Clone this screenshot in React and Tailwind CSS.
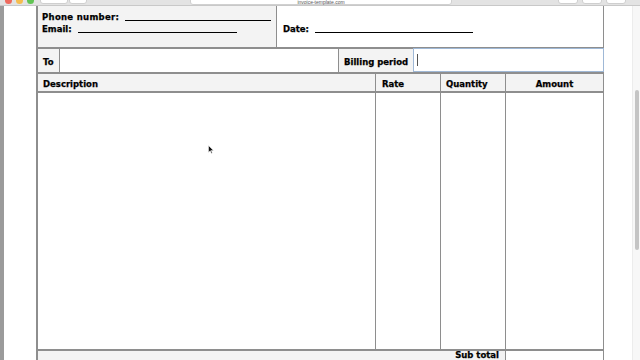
import React from "react";

export default function App() {
  const font = { fontFamily: '"DejaVu Sans", Verdana, sans-serif' };
  return (
    <div className="w-[640px] h-[360px] overflow-hidden bg-white flex flex-col" style={font}>
      {/* browser chrome remnant */}
      <div className="h-[6px] bg-[#e3e3e3] border-b border-[#c8c8c8] relative overflow-hidden shrink-0">
        <div className="absolute left-[5px] -top-[3px] flex gap-[4px]">
          <div className="w-[7px] h-[7px] rounded-full bg-[#ee6a5e]" />
          <div className="w-[7px] h-[7px] rounded-full bg-[#f5bd4f]" />
          <div className="w-[7px] h-[7px] rounded-full bg-[#61c454]" />
        </div>
        <div className="absolute left-[40px] -top-[6px] w-[28px] h-[10px] rounded-[3px] bg-white border border-[#cfcfcf]" />
        <div className="absolute left-[69px] -top-[6px] w-[18px] h-[10px] rounded-[3px] bg-white border border-[#cfcfcf]" />
        <div className="absolute left-[190px] -top-[6px] w-[262px] h-[11px] rounded-[3px] bg-white border border-[#d0d0d0]" />
        <div className="absolute left-[190px] top-0 w-[262px] flex justify-center">
          <span className="text-[5px] leading-[5px] text-[#555] whitespace-nowrap" style={{ fontFamily: '"Liberation Sans", Arial, sans-serif' }}>invoice-template.com</span>
        </div>
        <div className="absolute left-[558px] -top-[6px] w-[20px] h-[10px] rounded-[3px] bg-white border border-[#cfcfcf]" />
        <div className="absolute left-[582px] -top-[6px] w-[20px] h-[10px] rounded-[3px] bg-white border border-[#cfcfcf]" />
        <div className="absolute left-[606px] -top-[6px] w-[20px] h-[10px] rounded-[3px] bg-white border border-[#cfcfcf]" />
      </div>

      <div className="flex flex-1 min-h-0">
        <div className="w-[4px] bg-[#9b9b9b] shrink-0" />
        <div className="flex-1 flex relative">
          <div className="w-[32px] shrink-0" />
          {/* invoice table */}
          <div className="w-[568px] flex flex-col text-[8.5px] font-bold text-black whitespace-nowrap [-webkit-text-stroke:0.25px_black] border-l-2 border-r border-[#8e8e8e]">
            {/* top row */}
            <div className="h-[43px] flex border-b-2 border-[#8e8e8e] shrink-0">
              <div className="w-[239px] bg-[#f3f3f3] border-r border-[#8e8e8e] px-[4px] pt-[5px] leading-[12px]">
                <div className="flex">
                  <span className="tracking-[0.3px]">Phone number:</span>
                  <span className="ml-[6px] w-[146px] border-b border-black mb-[2px]" />
                </div>
                <div className="flex">
                  <span>Email:</span>
                  <span className="ml-[6px] w-[159px] border-b border-black mb-[2px]" />
                </div>
              </div>
              <div className="flex-1 px-[6px] pt-[17px] leading-[12px]">
                <div className="flex">
                  <span>Date:</span>
                  <span className="ml-[6px] w-[158px] border-b border-black mb-[2px]" />
                </div>
              </div>
            </div>
            {/* To row */}
            <div className="h-[25px] flex border-b-2 border-[#8e8e8e] shrink-0">
              <div className="w-[22px] bg-[#f3f3f3] border-r border-[#8e8e8e] flex items-center pl-[5px] pt-[3px]">To</div>
              <div className="w-[279px] border-r border-[#8e8e8e]" />
              <div className="w-[74px] bg-[#f3f3f3] flex items-center pl-[5px] pt-[3px]">Billing period</div>
              <div className="flex-1 border border-[#9fb8d6] flex items-center pl-[3px] -mr-px -mt-px bg-white">
                <div className="w-px h-[12px] bg-[#555]" />
              </div>
            </div>
            {/* header */}
            <div className="h-[19px] flex bg-[#f3f3f3] border-b-2 border-[#8e8e8e] shrink-0">
              <div className="w-[338px] border-r border-[#8e8e8e] flex items-center pl-[5px] pt-[3px]">Description</div>
              <div className="w-[65px] border-r border-[#8e8e8e] flex items-center pl-[6px] pt-[3px]">Rate</div>
              <div className="w-[65px] border-r border-[#8e8e8e] flex items-center pl-[5px] pt-[3px]">Quantity</div>
              <div className="flex-1 flex items-center justify-center pt-[3px]">Amount</div>
            </div>
            {/* body */}
            <div className="h-[258px] flex border-b-2 border-[#8e8e8e] shrink-0">
              <div className="w-[338px] border-r border-[#8e8e8e] relative">
                <svg className="absolute left-[170px] top-[52px]" width="6" height="9" viewBox="0 0 6 9">
                  <path d="M0.5 0.5 L0.5 7.5 L2.2 5.8 L3.4 8.5 L4.3 8.1 L3.2 5.4 L5.5 5.4 Z" fill="#111" stroke="#fff" strokeWidth="0.5" />
                </svg>
              </div>
              <div className="w-[65px] border-r border-[#8e8e8e]" />
              <div className="w-[65px] border-r border-[#8e8e8e]" />
              <div className="flex-1" />
            </div>
            {/* sub total */}
            <div className="flex flex-1 bg-[#f3f3f3]">
              <div className="w-[468px] border-r border-[#8e8e8e] flex justify-end pr-[6px] leading-[9px]">Sub total</div>
              <div className="flex-1 bg-white" />
            </div>
          </div>
          <div className="flex-1" />
          {/* scrollbar */}
          <div className="w-[8px] bg-[#f7f7f7] border-l border-[#ececec] relative shrink-0">
            <div className="absolute left-[2px] top-[84px] w-[4px] h-[160px] rounded-full bg-[#c4c4c4]" />
          </div>
        </div>
      </div>
    </div>
  );
}
